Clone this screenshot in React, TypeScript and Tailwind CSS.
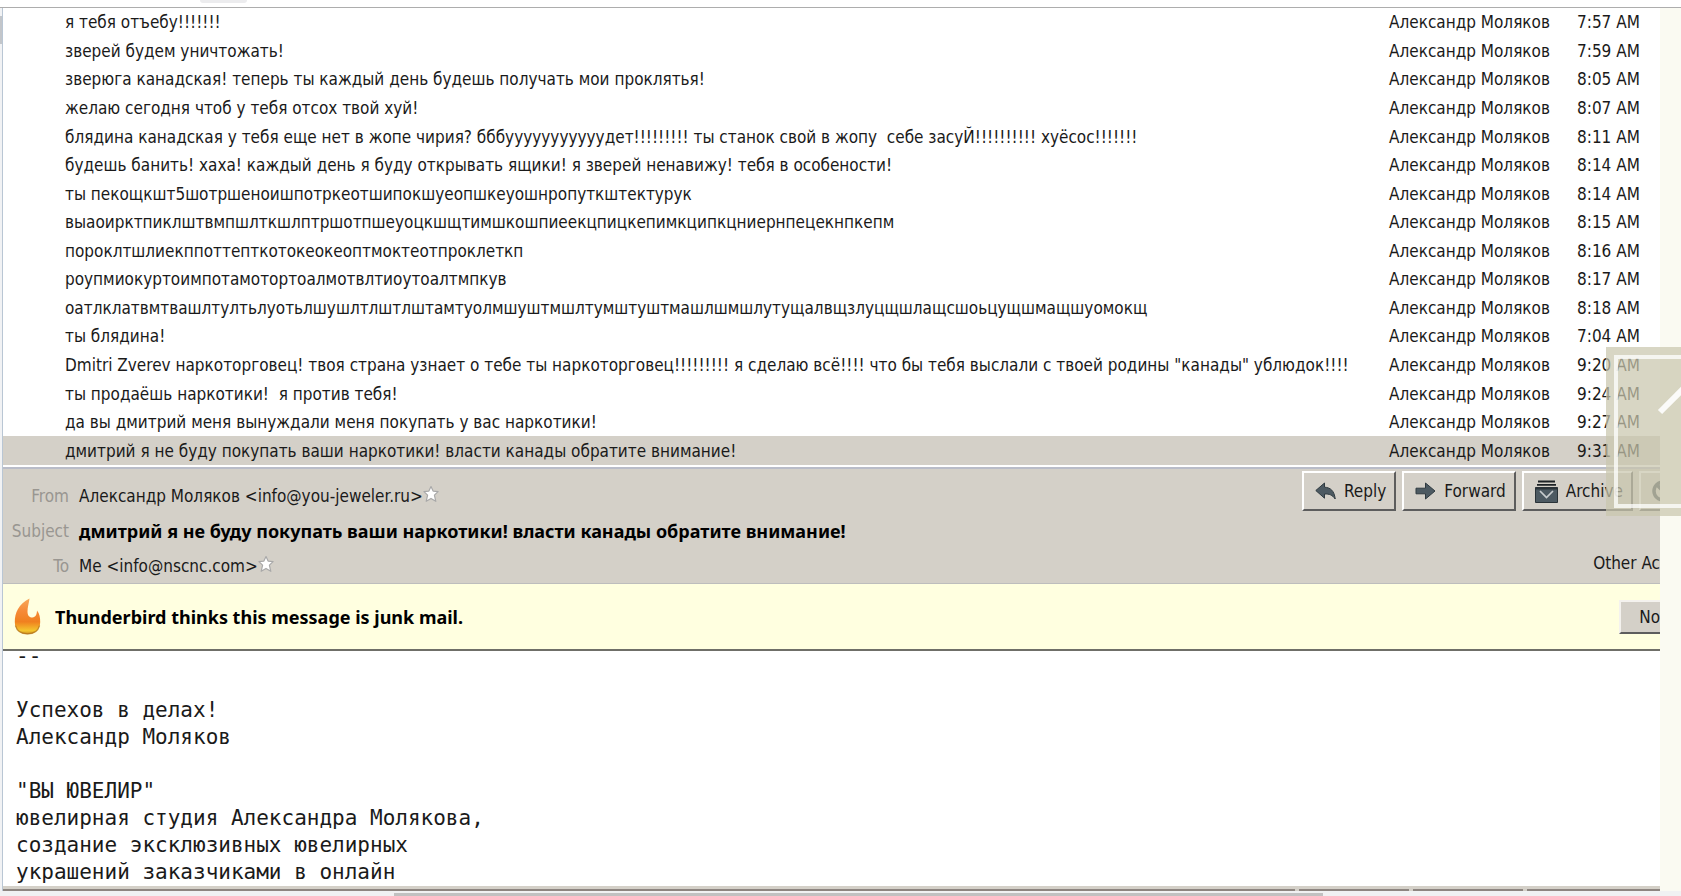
import type { ReactNode } from "react"

type Message = { subject: string; time: string }

const SENDER = "Александр Моляков"

const messages: Message[] = [
  { subject: "я тебя отъебу!!!!!!!", time: "7:57 AM" },
  { subject: "зверей будем уничтожать!", time: "7:59 AM" },
  { subject: "зверюга канадская! теперь ты каждый день будешь получать мои проклятья!", time: "8:05 AM" },
  { subject: "желаю сегодня чтоб у тебя отсох твой хуй!", time: "8:07 AM" },
  { subject: "блядина канадская у тебя еще нет в жопе чирия? бббууууууууууудет!!!!!!!!! ты станок свой в жопу  себе засуЙ!!!!!!!!!! хуёсос!!!!!!!", time: "8:11 AM" },
  { subject: "будешь банить! хаха! каждый день я буду открывать ящики! я зверей ненавижу! тебя в особености!", time: "8:14 AM" },
  { subject: "ты пекощкшт5шотршеноишпотркеотшипокшуеопшкеуошнропуткштектурук", time: "8:14 AM" },
  { subject: "выаоирктпиклштвмпшлткшлптршотпшеуоцкшщтимшкошпиеекцпицкепимкципкцниернпецекнпкепм", time: "8:15 AM" },
  { subject: "пороклтшлиекппоттепткотокеокеоптмоктеотпроклеткп", time: "8:16 AM" },
  { subject: "роупмиокуртоимпотамотортоалмотвлтиоутоалтмпкув", time: "8:17 AM" },
  { subject: "оатлклатвмтвашлтултьлуотьлшушлтлштлштамтуолмшуштмшлтумштуштмашлшмшлутущалвщзлуцщшлащсшоьцущшмащшуомокщ", time: "8:18 AM" },
  { subject: "ты блядина!", time: "7:04 AM" },
  { subject: "Dmitri Zverev наркоторговец! твоя страна узнает о тебе ты наркоторговец!!!!!!!!! я сделаю всё!!!! что бы тебя выслали с твоей родины \"канады\" ублюдок!!!!", time: "9:20 AM" },
  { subject: "ты продаёшь наркотики!  я против тебя!", time: "9:24 AM" },
  { subject: "да вы дмитрий меня вынуждали меня покупать у вас наркотики!", time: "9:27 AM" },
  { subject: "дмитрий я не буду покупать ваши наркотики! власти канады обратите внимание!", time: "9:31 AM" },
]

const body = `--

Успехов в делах!
Александр Моляков

"ВЫ ЮВЕЛИР"
ювелирная студия Александра Молякова,
создание эксклюзивных ювелирных
украшений заказчиками в онлайн`

function Star() {
  return (
    <svg viewBox="0 0 16 18" className="-mt-1 h-[18px] w-4 shrink-0" aria-hidden="true">
      <path d="M8 1.5l2.1 4.6 5 .5-3.7 3.5 1.4 6.2L8 13.4l-4.8 2.9 1.4-6.2L.9 6.6l5-.5z" fill="#fff" stroke="#a9a9a9" strokeWidth="1.2" strokeLinejoin="round" />
    </svg>
  )
}

function ReplyIcon() {
  return (
    <svg viewBox="0 0 21 18" className="h-[18px] w-[21px]" aria-hidden="true">
      <path d="M.8 8.5L9.5 1v4.200c6 .3 9.800 3.600 10.700 11.800-2.700-4-5.800-5.200-10.700-5v4.200z" fill="#4d5a62" stroke="#2f3a40" strokeWidth="1" strokeLinejoin="round" />
    </svg>
  )
}

function ForwardIcon() {
  return (
    <svg viewBox="0 0 21 18" className="h-[18px] w-[21px]" aria-hidden="true">
      <path d="M1 6.2h9.500V1L20 9l-9.500 8v-5.200H1z" fill="#4d5a62" stroke="#2f3a40" strokeWidth="1" strokeLinejoin="round" />
    </svg>
  )
}

function ArchiveIcon() {
  return (
    <svg viewBox="0 0 23 23" className="h-[23px] w-[23px]" aria-hidden="true">
      <path d="M3 1.5h17M2 4.800h19" stroke="#1d2225" strokeWidth="1.8" />
      <path d="M.5 7.500h22v15H.5z" fill="#4d5a62" stroke="#2a3338" />
      <path d="M.5 7.500h22v2H.5z" fill="#2a3338" />
      <path d="M5 11l6.500 6.500L18 11" fill="none" stroke="#c9cdcf" strokeWidth="1.7" />
    </svg>
  )
}

function JunkIcon() {
  return (
    <svg viewBox="0 0 22 22" className="h-[22px] w-[22px]" aria-hidden="true">
      <circle cx="11" cy="11" r="9" fill="none" stroke="#3b464c" strokeWidth="3.500" />
      <path d="M5 5l12 12" stroke="#3b464c" strokeWidth="3.500" />
    </svg>
  )
}

function Flame() {
  return (
    <svg viewBox="0 0 27 37" className="h-[37px] w-[27px] shrink-0" aria-hidden="true">
      <defs>
        <linearGradient id="flame" x1="0" y1="0" x2="0" y2="1">
          <stop offset="0" stopColor="#f7a95c" />
          <stop offset=".35" stopColor="#f68a38" />
          <stop offset=".65" stopColor="#f0801f" />
          <stop offset=".9" stopColor="#f4c62e" />
          <stop offset="1" stopColor="#c98a22" />
        </linearGradient>
      </defs>
      <path d="M15.500 .5C4.500 6 .8 15 .8 24c0 7.500 5.200 12.300 12.700 12.300S26.200 31.500 26.200 24c0-4.500-.6-8.500-3.200-11.500-.1 4-1.500 6.700-4.500 7-3.200.2-5-2-5-6C13.500 9 15 5 15.500 .5z" fill="url(#flame)" />
      <path d="M1.400 27.500c1.500 5.500 6 8.300 12.100 8.300s10.600-2.800 12.100-8.300" fill="none" stroke="#b0701c" strokeWidth="1.200" opacity=".7" />
    </svg>
  )
}

function ToolButton({ icon, label, children }: { icon: ReactNode; label: string; children?: ReactNode }) {
  return (
    <button
      aria-label={label}
      className="flex h-10 shrink-0 items-center gap-2 border-2 border-t-white border-r-[#5d5d5d] border-b-[#5d5d5d] border-l-white bg-[#d4d0c8] pr-2 pl-[11px]"
    >
      {icon}
      {children}
    </button>
  )
}

function Field({ label, children }: { label: string; children: ReactNode }) {
  return (
    <div className="flex h-[35px] items-center">
      <dt className="w-[66px] shrink-0 text-right text-[#999691]">{label}</dt>
      <dd className="flex items-center pl-[10px] whitespace-nowrap">{children}</dd>
    </div>
  )
}

export default function App() {
  return (
    <div className="relative flex h-screen flex-col overflow-hidden bg-white font-['DejaVu_Sans_Condensed','Noto_Sans',sans-serif] text-[17px] leading-6 text-[#1a1a1a]">
      <div className="h-2 shrink-0 border-b border-[#adadad]">
        <div className="ml-[200px] h-[3px] w-[47px] rounded-b-full bg-[#ececee]" />
      </div>

      <div className="flex min-h-0 flex-1">
        <div className="w-[3px] shrink-0 border-r border-[#b9c6d4] bg-[#f1f2f4] pt-2">
          <div className="h-7 bg-[#c3c6ca]" />
        </div>

        <main className="flex min-w-0 flex-1 flex-col overflow-hidden">
          <table className="h-[457px] w-full shrink-0 table-fixed">
            <tbody>
              {messages.map((m, i) => (
                <tr key={i} className={i === messages.length - 1 ? "bg-[#d4d0c8]" : ""}>
                  <td className="p-0 pl-[62px] whitespace-pre">{m.subject}</td>
                  <td className="w-[188px] p-0 whitespace-nowrap">{SENDER}</td>
                  <td className="w-[83px] p-0 whitespace-nowrap">{m.time}</td>
                </tr>
              ))}
            </tbody>
          </table>

          <header className="mt-[2px] flex h-[117px] shrink-0 border-t-2 border-b border-t-[#b9bcc8] border-b-[#bdbdbd] bg-[#d4d0c8]">
            <dl className="min-w-0 flex-1 pt-[9px]">
              <Field label="From">
                {SENDER} &lt;info@you-jeweler.ru&gt;
                <Star />
              </Field>
              <Field label="Subject">
                <strong className="font-['Noto_Sans',sans-serif] text-[18px] text-black">дмитрий я не буду покупать ваши наркотики! власти канады обратите внимание!</strong>
              </Field>
              <Field label="To">
                Me &lt;info@nscnc.com&gt;
                <Star />
              </Field>
            </dl>
            <div className="flex w-[358px] shrink-0 flex-col justify-between overflow-hidden pt-[2px] pb-2 whitespace-nowrap">
              <div className="flex gap-[6px]">
                <ToolButton icon={<ReplyIcon />} label="Reply">Reply</ToolButton>
                <ToolButton icon={<ForwardIcon />} label="Forward">Forward</ToolButton>
                <ToolButton icon={<ArchiveIcon />} label="Archive">Archive</ToolButton>
                <ToolButton icon={<JunkIcon />} label="Junk" />
              </div>
              <button className="self-end">Other Ac</button>
            </div>
          </header>

          <section className="flex h-[67px] shrink-0 items-center overflow-hidden border-b-2 border-[#6f6f68] bg-[#ffffe0] pl-[11px]">
            <Flame />
            <strong className="flex-1 pl-[14px] font-['Noto_Sans',sans-serif] text-[18px] text-black">Thunderbird thinks this message is junk mail.</strong>
            <button className="h-[34px] w-[41px] border-2 border-t-[#f4f2ee] border-r-0 border-b-[#5d5d5d] border-l-[#f4f2ee] bg-[#d4d0c8] text-right">No</button>
          </section>

          <div className="min-h-0 flex-1 overflow-hidden">
            <pre className="-mt-2 pl-[13px] font-['DejaVu_Sans_Mono',monospace] text-[21px] leading-[27px]">{body}</pre>
          </div>

          <div className="flex h-[5px] shrink-0 items-end gap-1 bg-[#d4d0c8]">
            <div className="h-[2px] flex-1 bg-[#8d8580]" />
            <div className="h-[2px] w-[110px] bg-[#8d8580]" />
            <div className="h-[2px] w-[110px] bg-[#8d8580]" />
            <div className="h-[2px] w-[133px] bg-[#8d8580]" />
          </div>
        </main>

        <div className="w-[21px] shrink-0 bg-[#fafaf2]" />
      </div>

      <div className="h-[5px] shrink-0 bg-[#f0f1f2] pt-[2px]">
        <div className="ml-[394px] h-[3px] w-[929px] bg-[#c1c1c1]" />
      </div>

      <button aria-label="Next" className="absolute top-[347px] right-0 h-[169px] w-[75px] bg-[#c9c6ad]/72">
        <svg viewBox="0 0 75 169" className="h-full w-full" aria-hidden="true">
          <path d="M75 10H10v149h65" fill="none" stroke="#fff" strokeOpacity=".75" strokeWidth="4" />
          <path d="M54 65l27-27" fill="none" stroke="#fff" strokeOpacity=".9" strokeWidth="6" />
        </svg>
      </button>
    </div>
  )
}
